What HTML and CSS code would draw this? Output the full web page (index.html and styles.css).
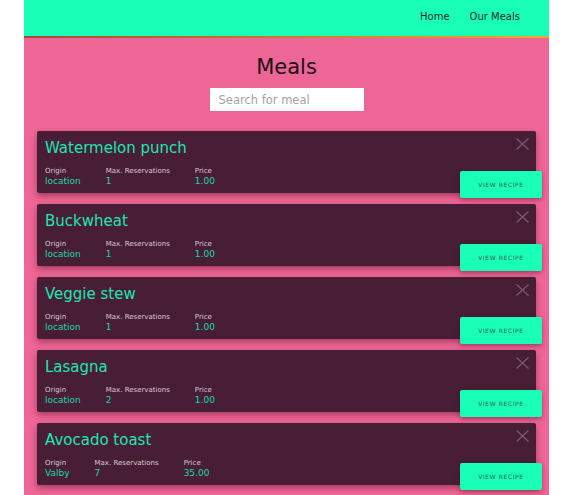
FILE: index.html
```html
<!DOCTYPE html>
<html lang="en">
<head>
<meta charset="utf-8">
<title>Meals</title>
<link rel="stylesheet" href="styles.css">
</head>
<body>
<div class="app">
  <header class="topbar">
    <nav class="nav">
      <a class="nav-link" href="#">Home</a>
      <a class="nav-link" href="#">Our Meals</a>
    </nav>
  </header>
  <main class="main">
    <h1 class="page-title">Meals</h1>
    <div class="search-wrap">
      <input class="search" type="text" placeholder="Search for meal">
    </div>
    <ul class="meal-list">
      <li class="meal-card">
        <h2 class="meal-title">Watermelon punch</h2>
        <div class="meal-info">
          <div class="info-col"><span class="info-label">Origin</span><span class="info-value">location</span></div>
          <div class="info-col"><span class="info-label">Max. Reservations</span><span class="info-value">1</span></div>
          <div class="info-col"><span class="info-label">Price</span><span class="info-value">1.00</span></div>
        </div>
        <svg class="close" viewBox="0 0 13 12"><path d="M0.5 0.5L12.5 11.5M12.5 0.5L0.5 11.5"/></svg>
        <button class="recipe-btn">VIEW RECIPE</button>
      </li>
      <li class="meal-card">
        <h2 class="meal-title">Buckwheat</h2>
        <div class="meal-info">
          <div class="info-col"><span class="info-label">Origin</span><span class="info-value">location</span></div>
          <div class="info-col"><span class="info-label">Max. Reservations</span><span class="info-value">1</span></div>
          <div class="info-col"><span class="info-label">Price</span><span class="info-value">1.00</span></div>
        </div>
        <svg class="close" viewBox="0 0 13 12"><path d="M0.5 0.5L12.5 11.5M12.5 0.5L0.5 11.5"/></svg>
        <button class="recipe-btn">VIEW RECIPE</button>
      </li>
      <li class="meal-card">
        <h2 class="meal-title">Veggie stew</h2>
        <div class="meal-info">
          <div class="info-col"><span class="info-label">Origin</span><span class="info-value">location</span></div>
          <div class="info-col"><span class="info-label">Max. Reservations</span><span class="info-value">1</span></div>
          <div class="info-col"><span class="info-label">Price</span><span class="info-value">1.00</span></div>
        </div>
        <svg class="close" viewBox="0 0 13 12"><path d="M0.5 0.5L12.5 11.5M12.5 0.5L0.5 11.5"/></svg>
        <button class="recipe-btn">VIEW RECIPE</button>
      </li>
      <li class="meal-card">
        <h2 class="meal-title">Lasagna</h2>
        <div class="meal-info">
          <div class="info-col"><span class="info-label">Origin</span><span class="info-value">location</span></div>
          <div class="info-col"><span class="info-label">Max. Reservations</span><span class="info-value">2</span></div>
          <div class="info-col"><span class="info-label">Price</span><span class="info-value">1.00</span></div>
        </div>
        <svg class="close" viewBox="0 0 13 12"><path d="M0.5 0.5L12.5 11.5M12.5 0.5L0.5 11.5"/></svg>
        <button class="recipe-btn">VIEW RECIPE</button>
      </li>
      <li class="meal-card">
        <h2 class="meal-title">Avocado toast</h2>
        <div class="meal-info">
          <div class="info-col"><span class="info-label">Origin</span><span class="info-value">Valby</span></div>
          <div class="info-col"><span class="info-label">Max. Reservations</span><span class="info-value">7</span></div>
          <div class="info-col"><span class="info-label">Price</span><span class="info-value">35.00</span></div>
        </div>
        <svg class="close" viewBox="0 0 13 12"><path d="M0.5 0.5L12.5 11.5M12.5 0.5L0.5 11.5"/></svg>
        <button class="recipe-btn">VIEW RECIPE</button>
      </li>
    </ul>
  </main>
</div>
</body>
</html>
```
FILE: styles.css
```css
html, body {
  margin: 0;
  padding: 0;
  background: #ffffff;
}
body {
  font-family: "DejaVu Sans", "Open Sans", sans-serif;
}
.app {
  margin-left: 24px;
  width: 525px;
  min-height: 495px;
  background: #ee6695;
}
.topbar {
  height: 36px;
  box-sizing: content-box;
  background: #1affb8;
  border-bottom: 2px solid transparent;
  border-image: linear-gradient(to right, #a44a36, #f3a72a) 1;
  display: flex;
  align-items: center;
  justify-content: flex-end;
}
.nav {
  display: flex;
  gap: 20px;
  padding-right: 29px;
  padding-bottom: 3px;
}
.nav-link {
  color: #1d2a24;
  text-decoration: none;
  font-size: 10px;
}
.main {
  padding: 16px 13px 0;
}
.page-title {
  margin: 0;
  text-align: center;
  font-weight: 400;
  font-size: 21px;
  line-height: 26px;
  color: #1b1016;
}
.search-wrap {
  display: flex;
  justify-content: center;
  margin-top: 8px;
}
.search {
  width: 154px;
  height: 23px;
  box-sizing: border-box;
  border: none;
  padding: 0 9px;
  font-family: inherit;
  font-size: 11.5px;
  background: #fff;
}
.search::placeholder {
  color: #a3a3a3;
}
.meal-list {
  list-style: none;
  margin: 20px 0 0;
  padding: 0;
  display: flex;
  flex-direction: column;
  gap: 11px;
}
.meal-card {
  position: relative;
  height: 62px;
  box-sizing: border-box;
  padding: 7px 8px 0;
  background: #471e35;
  border-radius: 2px;
  box-shadow: 0 3px 6px rgba(80, 10, 40, 0.45);
}
.meal-title {
  margin: 0;
  font-weight: 400;
  font-size: 15px;
  line-height: 20px;
  color: #1de6ae;
}
.meal-info {
  display: flex;
  gap: 25px;
  margin-top: 9px;
}
.info-col {
  display: flex;
  flex-direction: column;
}
.info-label {
  font-size: 7px;
  line-height: 9px;
  color: #d9c9d1;
}
.info-value {
  font-size: 9px;
  line-height: 11px;
  color: #1bd8a4;
}
.close {
  position: absolute;
  top: 7px;
  right: 7px;
  width: 13px;
  height: 12px;
  fill: none;
  stroke: #7d5a6c;
  stroke-width: 1.2;
}
.recipe-btn {
  position: absolute;
  right: -6px;
  bottom: -5px;
  width: 82px;
  height: 27px;
  border: none;
  border-radius: 2px;
  background: #1affb8;
  box-shadow: 0 2px 5px rgba(80, 10, 40, 0.4);
  font-family: inherit;
  font-size: 6px;
  letter-spacing: 0.6px;
  color: #2b6352;
  padding: 0;
}
```
